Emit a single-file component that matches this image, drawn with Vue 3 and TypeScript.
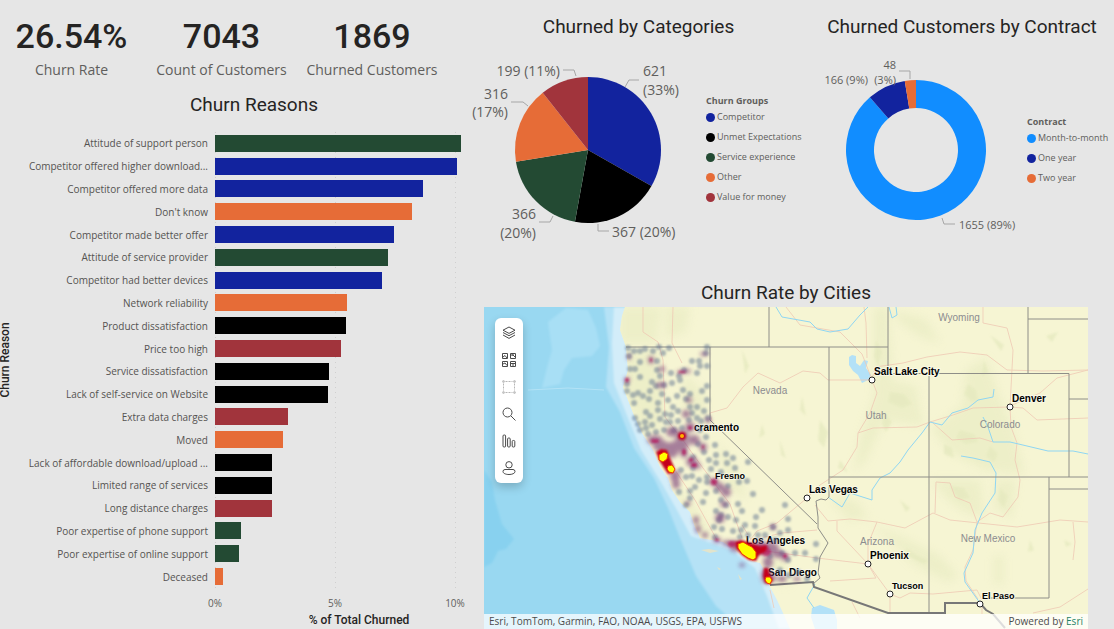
<script setup lang="ts">
interface Reason { label: string; pct: number; group: string }
interface Slice { name: string; value: number; group: string }
interface Place { name: string; x: number; y: number; size: 'lg' | 'sm' }

const kpis = [
  { value: '26.54%', label: 'Churn Rate' },
  { value: '7043', label: 'Count of Customers' },
  { value: '1869', label: 'Churned Customers' },
]

const reasons: Reason[] = [
  { label: 'Attitude of support person', pct: 10.25, group: 'service' },
  { label: 'Competitor offered higher download...', pct: 10.08, group: 'competitor' },
  { label: 'Competitor offered more data', pct: 8.65, group: 'competitor' },
  { label: "Don't know", pct: 8.22, group: 'other' },
  { label: 'Competitor made better offer', pct: 7.47, group: 'competitor' },
  { label: 'Attitude of service provider', pct: 7.2, group: 'service' },
  { label: 'Competitor had better devices', pct: 6.94, group: 'competitor' },
  { label: 'Network reliability', pct: 5.5, group: 'other' },
  { label: 'Product dissatisfaction', pct: 5.44, group: 'unmet' },
  { label: 'Price too high', pct: 5.24, group: 'value' },
  { label: 'Service dissatisfaction', pct: 4.75, group: 'unmet' },
  { label: 'Lack of self-service on Website', pct: 4.69, group: 'unmet' },
  { label: 'Extra data charges', pct: 3.04, group: 'value' },
  { label: 'Moved', pct: 2.83, group: 'other' },
  { label: 'Lack of affordable download/upload ...', pct: 2.36, group: 'unmet' },
  { label: 'Limited range of services', pct: 2.36, group: 'unmet' },
  { label: 'Long distance charges', pct: 2.36, group: 'value' },
  { label: 'Poor expertise of phone support', pct: 1.07, group: 'service' },
  { label: 'Poor expertise of online support', pct: 1.02, group: 'service' },
  { label: 'Deceased', pct: 0.33, group: 'other' },
]

const categories: Slice[] = [
  { name: 'Competitor', value: 621, group: 'competitor' },
  { name: 'Unmet Expectations', value: 367, group: 'unmet' },
  { name: 'Service experience', value: 366, group: 'service' },
  { name: 'Other', value: 316, group: 'other' },
  { name: 'Value for money', value: 199, group: 'value' },
]

const contracts: Slice[] = [
  { name: 'Month-to-month', value: 1655, group: 'monthly' },
  { name: 'One year', value: 166, group: 'competitor' },
  { name: 'Two year', value: 48, group: 'other' },
]

function arcs(slices: Slice[], cx: number, cy: number, outer: number, inner: number) {
  const total = slices.reduce((sum, s) => sum + s.value, 0)
  let from = 0
  const at = (r: number, a: number) =>
    `${(cx + r * Math.sin(a)).toFixed(2)} ${(cy - r * Math.cos(a)).toFixed(2)}`
  return slices.map((s) => {
    const to = from + (s.value / total) * Math.PI * 2
    const big = to - from > Math.PI ? 1 : 0
    const d =
      `M${at(outer, from)}A${outer} ${outer} 0 ${big} 1 ${at(outer, to)}` +
      (inner ? `L${at(inner, to)}A${inner} ${inner} 0 ${big} 0 ${at(inner, from)}Z` : `L${cx} ${cy}Z`)
    from = to
    return { d, group: s.group, name: s.name }
  })
}
const pie = arcs(categories, 104, 110, 73, 0)
const donut = arcs(contracts, 106, 110, 70, 42)

const cities: Place[] = [
  { name: 'Salt Lake City', x: 872, y: 380, size: 'lg' },
  { name: 'Denver', x: 1010, y: 407, size: 'lg' },
  { name: 'Las Vegas', x: 807, y: 498, size: 'lg' },
  { name: 'Phoenix', x: 868, y: 564, size: 'lg' },
  { name: 'Tucson', x: 890, y: 594, size: 'sm' },
  { name: 'El Paso', x: 980, y: 604, size: 'sm' },
]
const coastCities: Place[] = [
  { name: 'cramento', x: 694, y: 431, size: 'lg' },
  { name: 'Fresno', x: 715, y: 479, size: 'sm' },
  { name: 'Los Angeles', x: 746, y: 544, size: 'lg' },
  { name: 'San Diego', x: 768, y: 576, size: 'lg' },
]
const states = [
  { name: 'Wyoming', x: 959, y: 321 },
  { name: 'Nevada', x: 770, y: 394 },
  { name: 'Utah', x: 876, y: 419 },
  { name: 'Colorado', x: 1000, y: 428 },
  { name: 'Arizona', x: 877, y: 545 },
  { name: 'New Mexico', x: 988, y: 542 },
]

// Sparse churn locations: [x, y]
const sparse: number[][] = [
  [628, 348], [634, 351], [640, 351], [645, 349], [653, 351], [659, 347], [663, 353], [669, 348], [629, 356],
  [640, 362], [657, 361], [630, 369], [635, 369], [657, 370], [640, 377], [671, 373], [679, 376], [692, 361],
  [699, 361], [700, 366], [697, 373], [707, 366], [706, 353], [707, 347], [652, 382], [660, 376], [664, 385],
  [672, 383], [680, 380], [656, 386], [633, 395], [638, 393], [643, 396], [627, 384], [627, 391], [634, 403],
  [658, 403], [668, 400], [673, 407], [665, 414], [707, 386], [690, 394], [702, 391], [707, 400], [690, 407],
  [697, 407], [635, 418], [638, 424], [645, 422], [652, 425], [660, 419], [671, 415], [648, 434], [656, 432],
  [664, 430], [670, 422], [678, 421], [689, 420], [697, 418], [701, 421], [640, 430], [686, 399], [650, 416],
  [646, 412], [666, 422], [674, 430], [700, 430], [708, 418], [706, 437], [715, 445], [726, 454], [716, 463],
  [727, 463], [716, 455], [711, 469], [721, 472], [735, 468], [748, 462], [747, 481], [753, 494], [756, 517],
  [762, 510], [785, 505], [788, 519], [733, 458], [707, 477], [699, 480], [692, 476], [695, 487], [706, 493],
  [716, 491], [707, 482], [728, 486], [739, 482], [721, 500], [726, 505], [738, 504], [742, 511], [736, 520],
  [721, 515], [716, 511], [714, 527], [719, 520], [728, 517], [733, 531], [745, 525], [748, 535], [740, 537],
  [722, 529], [715, 537], [755, 526], [765, 535], [773, 527], [780, 533], [788, 530], [741, 530], [758, 535],
  [690, 498], [686, 505], [679, 492], [690, 491], [703, 502], [693, 468], [686, 477], [681, 470], [693, 457],
  [795, 553], [805, 553], [816, 544], [816, 559], [798, 572], [780, 570], [789, 575], [807, 579], [775, 540],
  [788, 560], [770, 556], [782, 553], [698, 444], [704, 452], [709, 460], [683, 390], [677, 396], [650, 391],
  [649, 399], [684, 370], [662, 394], [678, 411], [682, 428], [692, 413], [704, 411], [646, 428], [658, 410],
]
// Blended purple areas: [x, y, rx, ry]
const medium: number[][] = [
  [651, 360, 3, 4], [662, 369, 3, 3], [629, 357, 2, 3], [627, 380, 3, 3], [681, 372, 4, 2], [687, 371, 4, 2],
  [704, 354, 4, 2], [689, 400, 3, 3], [661, 385, 5, 3], [686, 414, 4, 4], [708, 420, 3, 3], [655, 440, 8, 5],
  [661, 446, 8, 6], [671, 450, 8, 8], [680, 445, 9, 6], [690, 427, 5, 5], [682, 436, 7, 6], [694, 440, 6, 5],
  [703, 447, 4, 4], [684, 453, 4, 5], [692, 462, 6, 5], [697, 466, 4, 3], [675, 476, 5, 6], [676, 484, 4, 5],
  [714, 482, 5, 4], [720, 487, 5, 4], [726, 492, 5, 5], [724, 504, 4, 3], [688, 503, 3, 2], [696, 520, 3, 4],
  [698, 529, 3, 4], [705, 535, 3, 3], [717, 540, 4, 3], [728, 543, 6, 3], [735, 546, 6, 6], [760, 548, 9, 7],
  [770, 548, 9, 6], [778, 554, 6, 4], [785, 557, 4, 4], [768, 562, 5, 6], [766, 576, 5, 8], [772, 578, 4, 4],
  [773, 527, 3, 3], [797, 579, 4, 2], [782, 579, 5, 3], [720, 518, 5, 5], [672, 432, 6, 5], [742, 565, 3, 2],
]
// Dense red areas
const dense: number[][] = [
  [651, 360, 1, 2], [627, 380, 2, 2], [682, 372, 4, 1], [655, 441, 4, 2], [690, 428, 2, 2], [684, 452, 2, 3],
  [691, 460, 2, 2], [694, 465, 3, 2], [714, 482, 3, 3], [703, 447, 1, 2], [717, 540, 2, 1], [785, 556, 2, 2],
  [761, 548, 8, 3], [766, 552, 5, 4], [732, 544, 4, 3],
]

const ticks = [{ label: '0%', at: 0 }, { label: '5%', at: 50 }, { label: '10%', at: 100 }]
</script>

<template>
  <main class="report">
    <section class="left">
      <div class="kpis">
        <div v-for="k in kpis" :key="k.label" class="kpi">
          <strong class="kpi-value">{{ k.value }}</strong>
          <span class="kpi-label">{{ k.label }}</span>
        </div>
      </div>
      <h2 class="reasons-title">Churn Reasons</h2>
      <div class="bar-chart">
        <span class="y-title">Churn Reason</span>
        <div class="grid-lines"><i v-for="t in ticks" :key="t.at" :style="{ left: t.at + '%' }"></i></div>
        <div v-for="r in reasons" :key="r.label" class="bar-row">
          <span class="bar-label">{{ r.label }}</span>
          <div class="bar-track"><div class="bar" :class="r.group" :style="{ width: r.pct * 10 + '%' }"></div></div>
        </div>
      </div>
      <div class="axis">
        <span v-for="t in ticks" :key="t.at" :style="{ left: t.at + '%' }">{{ t.label }}</span>
      </div>
      <p class="x-title">% of Total Churned</p>
    </section>

    <section class="right">
      <div class="pies">
        <article class="card">
          <h2 class="title">Churned by Categories</h2>
          <div class="card-body">
            <svg class="pie-svg" viewBox="0 0 222 210" role="img" aria-label="Churned by Categories">
              <path v-for="a in pie" :key="a.name" :d="a.d" :class="a.group" />
              <g class="leader">
                <path d="M141 47l4-7h10" /><path d="M79 30h11l2 6" /><path d="M27 62h12l5 4" />
                <path d="M55 182h11l3-6" /><path d="M114 184v7h11" />
              </g>
              <g class="pie-text">
                <text x="159" y="36">621</text><text x="159" y="55">(33%)</text>
                <text x="76" y="36" text-anchor="end">199 (11%)</text>
                <text x="24" y="59" text-anchor="end">316</text><text x="24" y="77" text-anchor="end">(17%)</text>
                <text x="52" y="179" text-anchor="end">366</text><text x="52" y="198" text-anchor="end">(20%)</text>
                <text x="128" y="197">367 (20%)</text>
              </g>
            </svg>
            <div class="legend">
              <h3>Churn Groups</h3>
              <ul><li v-for="c in categories" :key="c.name"><i :class="c.group"></i>{{ c.name }}</li></ul>
            </div>
          </div>
        </article>
        <article class="card contract">
          <h2 class="title">Churned Customers by Contract</h2>
          <div class="card-body">
            <svg class="donut-svg" viewBox="0 0 217 210" role="img" aria-label="Churned Customers by Contract">
              <path v-for="a in donut" :key="a.name" :d="a.d" :class="a.group" />
              <g class="leader"><path d="M89 31h11v8" /><path d="M132 178l2 6h11" /></g>
              <g class="donut-text">
                <text x="86" y="29" text-anchor="end">48</text><text x="86" y="44" text-anchor="end">(3%)</text>
                <text x="58" y="44" text-anchor="end">166 (9%)</text>
                <text x="149" y="189">1655 (89%)</text>
              </g>
            </svg>
            <div class="legend low">
              <h3>Contract</h3>
              <ul><li v-for="c in contracts" :key="c.name"><i :class="c.group"></i>{{ c.name }}</li></ul>
            </div>
          </div>
        </article>
      </div>

      <h2 class="title map-title">Churn Rate by Cities</h2>
      <div class="map">
        <svg class="map-svg" viewBox="484 307 604 322" preserveAspectRatio="xMidYMid slice" role="img" aria-label="Churn Rate by Cities">
          <defs>
            <filter id="soft" x="-10%" y="-10%" width="120%" height="120%"><feGaussianBlur stdDeviation="1.3" /></filter>
            <filter id="softer" x="-20%" y="-20%" width="140%" height="140%"><feGaussianBlur stdDeviation="2" /></filter>
            <filter id="haze" x="-20%" y="-20%" width="140%" height="140%"><feGaussianBlur stdDeviation="4" /></filter>
            <clipPath id="land-clip"><path d="M625 307l-3 9-2 14 6 17 2 23-5 17 10 26 9 20 11 17 7 17 8 11 4 12 8 12 10 10 5 15 5 11 23 4 14 10 10 8 13 3 6 10 4 14 7 13 6 13 7 16H1088V307Z" /></clipPath>
          </defs>
          <rect class="ocean" x="484" y="307" width="604" height="322" />
          <g filter="url(#soft)">
            <path class="ocean-light" d="M548 322l18-14 22 2 8 18 4 18-8 10-20 2-8 12-4 14-18 4 6-24 4-14Z" />
            <path class="ocean-deep" d="M484 470l8 12 3 18 7 24 12 15-8 10-8 2-6 12-8 4Z" />
            <path class="shelf" d="M604 307l5 40-3 40 14 25 14 36 20 30 14 30 12 30 16 38 20 30 26 23H800L640 307Z" />
            <path class="shelf-pale" d="M614 307l-2 36 2 40 10 25 17 42 20 32 16 28 14 26 40 14 24 18 12 28 12 33H800V560L640 307Z" />
          </g>
          <path class="ocean-line" d="M528 390l40-2 36 2" />
          <path class="land" d="M625 307l-3 9-2 14 6 17 2 23-5 17 10 26 9 20 11 17 7 17 8 11 4 12 8 12 10 10 5 15 5 11 23 4 14 10 10 8 13 3 6 10 4 14 7 13 6 13 7 16H1088V307Z" />
          <g class="island"><path d="M701 550l8-1 10 2-9 2Z" /><path d="M717 567l4 2-2 1Z" /><path d="M738 574l4 5-2 1Z" /></g>
          <g class="terrain" clip-path="url(#land-clip)" filter="url(#haze)">
            <path d="M620 307h42l-6 36h-36Z" /><path d="M666 307h24l-4 24-20 8Z" />
            <path d="M626 350h32l6 60-4 20-20 2-16-40Z" /><path d="M684 372l22 24-2 28-22-16Z" />
            <path d="M672 482l22 24 20 32-18-2-16-34Z" /><path d="M716 442l18 24 14 34-20-12Z" />
            <path d="M874 307h14l4 66-2 34-16-4Z" /><path d="M880 378l36 8 8 40-40-6-18 40-12 12 6-34Z" />
            <path d="M966 370l20-12 14 40 14 34 10 42-40-4-34-18-18-22 30-24Z" />
            <path d="M932 480h48l4 38-20-6-18-14Z" /><path d="M996 480h20l-4 38-18-10Z" />
            <path d="M870 524l34 14 36 18 18 20-10 6-34-18-24-24Z" /><path d="M994 556h9v28h-9Z" />
            <path d="M830 498l26 2 12 18-20 2Z" /><path d="M766 555l18 8 6 22-14-2Z" />
            <path d="M896 311l30 8 14 24-20-6-22-16Z" />
          </g>
          <g class="terrain speck" filter="url(#soft)">
            <path d="M742 350l7 16-4 8ZM762 424l3 10-6 4ZM802 396l4 20-6-6ZM820 420l8 12-4 16-6-8ZM780 440l6 18-5-3ZM990 335l14 10-3 6ZM1046 336l12-4-6 10ZM1064 540l8 4-6 3ZM840 460l8 12-10-4ZM900 500l10 8-4 4ZM1030 540l4 10-6 2Z" />
            <path d="M968 384l8 6 2 10-6 2-8-8ZM984 360l4 12-6 4ZM960 430l14 4 4 8-12 2-10-6ZM990 446l8 8-4 8-8-6ZM944 444l8 4 2 10-10-4ZM890 392l14 2 8 10-10 4-14-6ZM884 412l8 10-6 10-4-8ZM876 340l6 12-4 14-4-10ZM950 486l14 2 6 10-12 2ZM1000 488l8 8-4 12-6-8ZM906 548l12 8 10 4-4 4-16-8Z" />
          </g>
          <g class="water">
            <path d="M849 357l3-2 4 1v7l4 3 4-6 4 1-2 7 5 7-3 5-6 3-4-8-5-4-4-6Z" />
            <path d="M812 608l8-3 14 5 3 10v9h-22l-4-12Z" />
          </g>
          <g class="road">
            <path d="M710 413l17-5 16-21 15-14 22 10 23-12 17 2 8 7h44l5 13-7 20-12 20-1 14-14 23-23 15-13 13" />
            <path d="M872 380l3-13 28-4 24-6 33-5 27 3 20 15 36 1 45-1" />
            <path d="M983 307v16l24 5 6 22-3 57 1 20 6 16-2 17 5 20-2 17-15 20-13-4-13 9-4 28-8 17 1 14 12 18" />
            <path d="M858 433l15-5 44-1 13-5 23-7 20-7 37-1 13 1 14 12 51-2M1010 406l30-13 17-15 31-8M933 423l19 17 28-2 13 4" />
            <path d="M815 505l13 16 22-2 27 3 28 6 28-15 17 7 67 7 43-7 28 2" />
            <path d="M877 522l-9 22v20l-31-33v-10M817 558l51 6 8 14-46 3M868 564l22 30 10 4 10-5 23 1 44-4 5 10M890 594v19" />
            <path d="M935 513l1-31 14 1 5 14 15 6 7 19M1033 613l27-6 28-18M1073 522l2 20-2 18M982 604v10" />
            <path d="M643 307v25l15 10 5 18 2 57 12 16M673 307l-1 36 10 20" />
            <path d="M807 498l-30 25-20 8-12 16M752 540l30-7 35-3M766 551l51 7M742 525l10 16M680 436l20 28 30 40 12 34M675 470l20 30 22 40" />
            <path d="M786 307l14 18 40 7 22 22 9 23M864 307l2 16 1 35M710 413l2 8M770 590l4 18M852 602l8 16" />
          </g>
          <g class="river">
            <path d="M776 307l6 10 28 5 7 7 13 3 18-3 12-14 8-8M889 307l3 11 5-3-1-8" />
            <path d="M994 389l-1 8-15 3-10 8-16 5-10 12-12-3-8 11-14 17-8 12-10 11-10 5-8 12v10l-22-7-8 14-14-10" />
            <path d="M983 417l5 10 5 15 17 0 17 4 21 5 25 0 15 3" />
            <path d="M961 456l12 2 17 4 6 11-1 20-13 20-7 17-2 23-9 20 1 9 15 21M815 584l-8 14 7 10" />
          </g>
          <g class="border">
            <path d="M626 347H888M710 347v73l107 104M769 307v40M829 347v150l-3 3-5-1-5 2 2 16v11l10 15-8 14-2 16 2 5-7 6" />
            <path d="M888 307v66.5H1069V477M929 373v240M829 477H1088M1028 307v66M1028 319h60M1069 399h19" />
            <path d="M1049 477v121h-64M1049 489h39" />
            <path class="national" d="M770 585l43-3 1 5 74 26h57v-10h35l6 7 7 4 12 14" />
          </g>
          <g class="state-name"><text v-for="s in states" :key="s.name" :x="s.x" :y="s.y" text-anchor="middle">{{ s.name }}</text></g>
          <g class="city">
            <text v-for="c in coastCities" :key="c.name" :x="c.x" :y="c.y" :class="c.size">{{ c.name }}</text>
            <g v-for="c in cities" :key="c.name">
              <circle :cx="c.x" :cy="c.y" r="3" />
              <text :x="c.x + 2" :y="c.y - 5" :class="c.size">{{ c.name }}</text>
            </g>
          </g>
          <g class="heat-sparse" filter="url(#soft)"><circle v-for="(p, i) in sparse" :key="i" :cx="p[0]" :cy="p[1]" r="3" /></g>
          <g class="heat-medium" filter="url(#softer)"><ellipse v-for="(p, i) in medium" :key="i" :cx="p[0]" :cy="p[1]" :rx="p[2]" :ry="p[3]" /></g>
          <g class="heat-dense" filter="url(#soft)"><ellipse v-for="(p, i) in dense" :key="i" :cx="p[0]" :cy="p[1]" :rx="p[2]" :ry="p[3]" /></g>
          <g filter="url(#soft)" class="heat-halo">
            <path d="M656 452l5-3 6 1 3 8 4 9-1 6-5 1-4-6-5-8Z" /><path d="M735 542l6-2 13 4 6 3 7-2-1 6-7 4-3 6-7-1-7-5-6-7Z" />
            <path d="M764 568l4 0 2 7 3 5-3 4-5-1-2-7Z" /><circle cx="682" cy="436" r="4" />
          </g>
          <g class="heat-core">
            <path d="M659 455l5-3 4 2-1 5-4 3-4-2Z" /><path d="M668 466l4-1 3 4-2 4-4-1-2-3Z" />
            <path d="M738 544l5-2 5 3 4 2 4 5v6l-3 2-5-2-6-4-4-6Z" /><path d="M766 577l4 0 2 3-2 4-3-1-2-3Z" />
          </g>
          <circle class="heat-spot" cx="682" cy="436" r="2" />
        </svg>

        <div class="toolbar">
          <button type="button" aria-label="Layers"><svg viewBox="0 0 14 14"><path d="M7 1l6 3.200-6 3.200-6-3.200ZM1 6.500l6 3.200 6-3.200M1 9l6 3.400 6-3.400" /></svg></button>
          <button type="button" aria-label="Basemap"><svg viewBox="0 0 14 14"><path d="M.5.5h5v5h-5ZM8.500.5h5v5h-5ZM.5 8.500h5v5h-5ZM8.500 8.500h5v5h-5ZM1 4l2-1.500 2 2.500M9 2h2l2 2M11 1v2M1 11l2-1 2 2.500M9 10.500h4M11 10.500v2.500" /></svg></button>
          <button type="button" class="muted" aria-label="Select"><svg viewBox="0 0 14 14"><path d="M3.500 1.500h7M3.500 12.500h7M1.500 3.500v7M12.500 3.500v7" stroke-dasharray="2 1" /><path d="M.8.8h1.400v1.400H.8ZM11.800.8h1.400v1.400h-1.400ZM.8 11.800h1.400v1.400H.8ZM11.800 11.800h1.400v1.400h-1.400Z" /></svg></button>
          <button type="button" aria-label="Search"><svg viewBox="0 0 14 14"><circle cx="5.500" cy="5.500" r="4.500" /><path d="M9 9l4.500 4.500" /></svg></button>
          <button type="button" aria-label="Infographics"><svg viewBox="0 0 14 14"><rect x="1" y="1" width="2.600" height="12" rx="1" /><rect x="5.600" y="4" width="2.600" height="9" rx="1" /><rect x="10.200" y="6.500" width="2.600" height="6.500" rx="1" /></svg></button>
          <button type="button" aria-label="Sign in"><svg viewBox="0 0 14 14"><circle cx="7" cy="3.800" r="3.200" /><path d="M3 8.500h8a2 2 0 0 1 2 2c0 2-3 3-6 3s-6-1-6-3a2 2 0 0 1 2-2Z" /></svg></button>
        </div>
        <div class="attribution">
          <span>Esri, TomTom, Garmin, FAO, NOAA, USGS, EPA, USFWS</span>
          <span>Powered by <a href="#">Esri</a></span>
        </div>
      </div>
    </section>
  </main>
</template>

<style>
body { margin: 0; background: #e6e6e6; }
</style>

<style scoped>
.report {
  display: grid;
  grid-template-columns: 484fr 630fr;
  min-height: 100vh;
  overflow: hidden;
  background: #e6e6e6;
  color: #252423;
  font-family: "Open Sans", "Noto Sans", sans-serif;
}
h2, h3, p, ul { margin: 0; padding: 0; }
ul { list-style: none; }

.competitor { fill: #12239e; background: #12239e; }
.unmet { fill: #000; background: #000; }
.service { fill: #234a33; background: #234a33; }
.other { fill: #e66c37; background: #e66c37; }
.value { fill: #a1343c; background: #a1343c; }
.monthly { fill: #118dff; background: #118dff; }

.left { display: flex; flex-direction: column; min-width: 0; }
.kpis { display: grid; grid-template-columns: 143fr 157fr 144fr; margin-right: 40px; padding-top: 16px; }
.kpi { display: flex; flex-direction: column; align-items: center; white-space: nowrap; }
.kpi-value { font: 500 34px/40px Roboto, sans-serif; }
.kpi-label { margin-top: 4px; font-size: 14px; line-height: 20px; color: #605e5c; }
.reasons-title { padding: 12px 0 0 24px; text-align: center; font: 400 19px/26px Roboto, sans-serif; }

.bar-chart { position: relative; display: grid; grid-auto-rows: 1fr; height: 456px; margin-top: 14px; }
.bar-row { display: grid; grid-template-columns: 208px 1fr; column-gap: 7px; align-items: center; margin-right: 29px; min-height: 0; }
.bar-label { text-align: right; font-size: 10px; line-height: 16px; color: #555351; white-space: nowrap; }
.bar { height: 17px; }
.bar-track { position: relative; }
.grid-lines { position: absolute; left: 215px; right: 29px; top: 0; bottom: 0; }
.grid-lines i {
  position: absolute;
  top: 0;
  bottom: 0;
  width: 1px;
  background: repeating-linear-gradient(#cfcfcf 0 1px, transparent 1px 5px);
}
.y-title {
  position: absolute;
  left: 0;
  top: 50%;
  transform: translateY(-50%) rotate(180deg);
  writing-mode: vertical-rl;
  font: 500 12px/10px Roboto, sans-serif;
}
.axis { position: relative; height: 16px; margin: 7px 29px 0 215px; font-size: 10px; line-height: 16px; color: #605e5c; }
.axis span { position: absolute; transform: translateX(-50%); }
.x-title { margin: 1px 0 0 234px; text-align: center; font: 500 12px/16px Roboto, sans-serif; }

.right { display: flex; flex-direction: column; min-width: 0; }
.pies { display: grid; grid-template-columns: 318fr 312fr; }
.card { min-width: 0; }
.title { text-align: center; font: 400 19px/26px Roboto, sans-serif; white-space: nowrap; }
.card .title { padding: 14px 9px 0 0; }
.contract .title { padding: 14px 0 0 8px; }
.card-body { display: flex; }
.contract .card-body { padding-left: 8px; }
.pie-svg { flex: none; width: 222px; height: 210px; overflow: visible; }
.donut-svg { flex: none; width: 217px; height: 210px; }
.leader { fill: none; stroke: #a6a6a6; }
.pie-text { font-size: 14px; fill: #605e5c; }
.donut-text { font-size: 11px; fill: #605e5c; }
.legend { padding-top: 54px; font-size: 9px; color: #605e5c; white-space: nowrap; }
.legend.low { padding-top: 75px; }
.legend h3 { font-size: 9px; font-weight: 700; line-height: 14px; }
.legend ul { display: grid; row-gap: 6px; margin-top: 2px; }
.legend li { display: flex; align-items: center; gap: 2px; line-height: 14px; }
.legend i { width: 9px; height: 9px; border-radius: 50%; }

.map-title { margin: 30px 26px 1px 0; }
.map { position: relative; flex: 1; min-height: 322px; margin-right: 26px; overflow: hidden; }
.map-svg { position: absolute; inset: 0; width: 100%; height: 100%; }
.ocean { fill: #99d8f1; }
.ocean-light { fill: #a8dff5; }
.ocean-deep { fill: #88d1ef; }
.ocean-line { fill: none; stroke: #b4e3f6; }
.shelf { fill: #b5e2f6; }
.shelf-pale { fill: #d3edf9; }
.land { fill: #f6f5d3; }
.island { fill: #e2e4cc; }
.terrain { fill: #e6eac0; opacity: .55; }
.speck { opacity: .8; }
.water { fill: #b3e1f7; }
.road { fill: none; stroke: #efc9b4; stroke-width: 1; opacity: .8; }
.river { fill: none; stroke: #8fd6f3; stroke-width: 1; stroke-linejoin: round; }
.border { fill: none; stroke: #8e8e88; stroke-width: 1; }
.national { stroke: #777; stroke-width: 2; }
.state-name { font: 10px "Liberation Sans", sans-serif; fill: #8c8c90; }
.city { font-family: "Liberation Sans", sans-serif; font-weight: 700; fill: #000; }
.city text { stroke: #f9f8e6; stroke-width: 2px; paint-order: stroke; }
.city .lg { font-size: 10px; }
.city .sm { font-size: 9px; }
.city circle { fill: #fff; stroke: #222; stroke-width: 1; }
.heat-sparse { fill: #5f7290; opacity: .5; }
.heat-medium { fill: #7c3f7c; opacity: .65; }
.heat-dense { fill: #b8145c; opacity: .75; }
.heat-halo { fill: #c4001e; }
.heat-core { fill: #ff0; stroke: #f03a00; stroke-width: 1; }
.heat-spot { fill: #ffb000; }

.toolbar {
  position: absolute;
  left: 11px;
  top: 11px;
  width: 28px;
  padding: 1px 0 2px;
  border-radius: 6px;
  background: #fff;
  box-shadow: 0 4px 10px rgba(0, 0, 0, .2);
}
.toolbar button { display: grid; place-items: center; width: 28px; height: 27px; padding: 0; border: 0; background: none; }
.toolbar svg { width: 14px; height: 14px; fill: none; stroke: #4a4a4a; stroke-width: 1; }
.toolbar .muted svg { stroke: #b5b5b5; }
.attribution {
  position: absolute;
  inset: auto 0 0 0;
  display: flex;
  justify-content: space-between;
  padding: 0 5px;
  background: rgba(255, 255, 255, .75);
  color: #4c4c4c;
  font-size: 10px;
  line-height: 15px;
}
.attribution a { color: #1e8266; text-decoration: none; }
</style>
